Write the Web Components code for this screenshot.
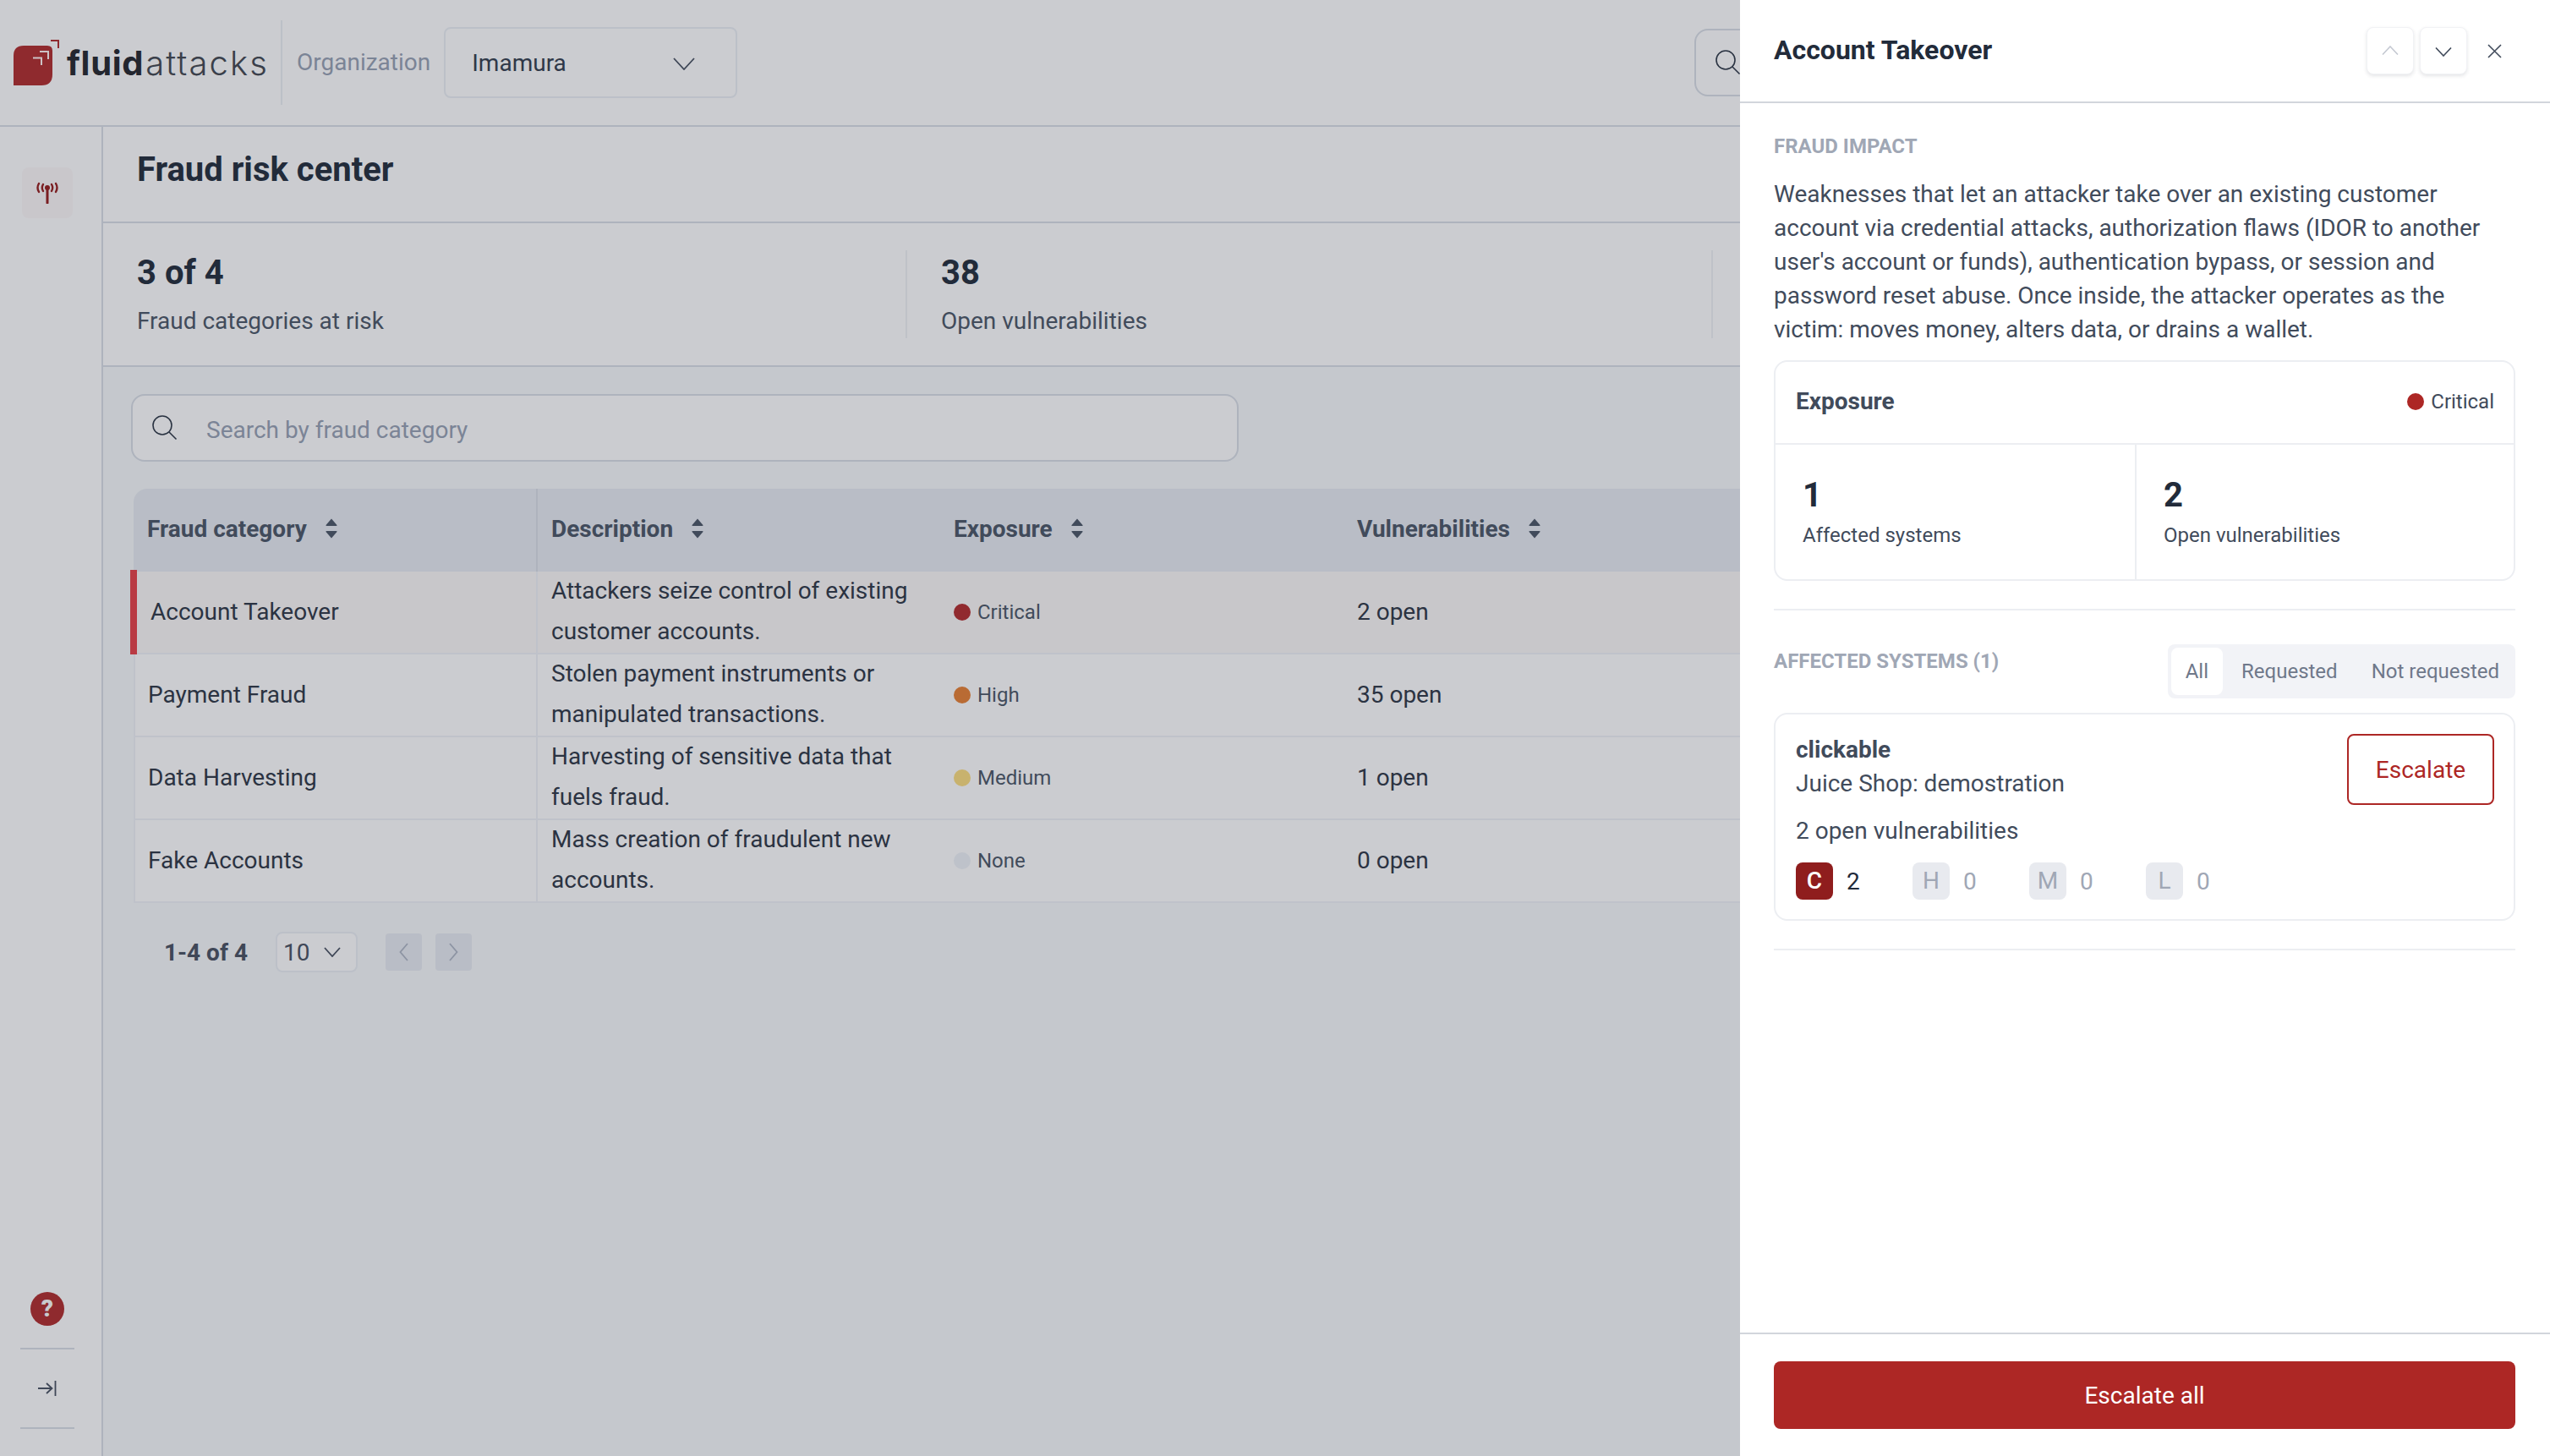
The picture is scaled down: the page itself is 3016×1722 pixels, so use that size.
<!DOCTYPE html>
<html lang="en">
<head>
<meta charset="utf-8">
<title>Fraud risk center</title>
<style>
  html, body { margin: 0; height: 100%; }
  body {
    width: 3016px;
    height: 1722px;
    overflow: hidden;
    position: relative;
    background: #cbccd0;
    color: #222b3a;
    font-family: Roboto, "Liberation Sans", sans-serif;
    font-size: 28px;
  }
</style>
</head>
<body>
  <fraud-app>
    <top-bar slot="top"></top-bar>
    <side-nav slot="side"></side-nav>
    <risk-page slot="main">
      <stat-tile slot="stats" value="3 of 4">Fraud categories at risk</stat-tile>
      <stat-tile slot="stats" value="38" divided>Open vulnerabilities</stat-tile>
      <stat-tile slot="stats" divided></stat-tile>
      <fraud-table slot="table">
        <fraud-row name="Account Takeover" level="critical" label="Critical" open="2 open" selected>Attackers seize control of existing customer accounts.</fraud-row>
        <fraud-row name="Payment Fraud" level="high" label="High" open="35 open">Stolen payment instruments or manipulated transactions.</fraud-row>
        <fraud-row name="Data Harvesting" level="medium" label="Medium" open="1 open">Harvesting of sensitive data that fuels fraud.</fraud-row>
        <fraud-row name="Fake Accounts" level="none" label="None" open="0 open">Mass creation of fraudulent new accounts.</fraud-row>
      </fraud-table>
    </risk-page>
  </fraud-app>

  <detail-drawer title-text="Account Takeover">
    <system-card name="clickable" detail="Juice Shop: demostration" open="2 open vulnerabilities"></system-card>
  </detail-drawer>

<script>
const CHEVRON_DOWN = (width, height, color) => `
  <svg width="${width}" height="${height}" viewBox="0 0 ${width} ${height}" fill="none" stroke="${color}" stroke-width="1.8" aria-hidden="true">
    <path d="M1 1L${width / 2} ${height - 1}L${width - 1} 1"/>
  </svg>`;

const SEARCH_ICON = `
  <svg width="30" height="30" viewBox="0 0 30 30" fill="none" stroke="#2a3342" stroke-width="1.6" aria-hidden="true">
    <circle cx="12" cy="12" r="11"/>
    <path d="M20 20l8.500 8.500"/>
  </svg>`;

class FraudApp extends HTMLElement {
  constructor() {
    super();
    this.attachShadow({ mode: 'open' });
    this.shadowRoot.innerHTML = `
      <style>
        :host { display: grid; grid-template-columns: 122px 1fr; grid-template-rows: 150px 1572px; width: 3016px; height: 1722px; }
        .top { grid-column: 1 / 3; min-width: 0; }
        .main { min-width: 0; overflow: hidden; }
      </style>
      <div class="top"><slot name="top"></slot></div>
      <slot name="side"></slot>
      <div class="main"><slot name="main"></slot></div>
    `;
  }
}

class TopBar extends HTMLElement {
  constructor() {
    super();
    this.attachShadow({ mode: 'open' });
    this.shadowRoot.innerHTML = `
      <style>
        :host { display: flex; align-items: center; box-sizing: border-box; height: 150px; border-bottom: 2px solid #aeb3bd; overflow: hidden; }
        .logo { display: flex; align-items: center; width: 332px; box-sizing: border-box; padding-left: 10px; height: 100%; position: relative; }
        .logo svg { flex: none; width: 60px; height: 60px; }
        .word { margin-left: 9px; margin-top: 1px; font-family: Inter, Roboto, sans-serif; font-size: 40px; line-height: 48px; color: #23262f; white-space: nowrap; }
        .word b { font-weight: 700; letter-spacing: .7px; }
        .word span { font-weight: 300; color: #3a3f4a; letter-spacing: 2.05px; margin-left: 2px; }
        .rule { flex: none; width: 2px; height: 100px; background: #bcc0c7; }
        .org { margin-left: 17px; color: #7b8496; line-height: 40px; }
        .select { flex: none; box-sizing: border-box; width: 347px; height: 84px; margin-left: 16px; padding: 0 48px 0 31px; display: flex; align-items: center; justify-content: space-between; border: 2px solid #bcc0c8; border-radius: 8px; color: #2f3848; }
        .select svg { margin-top: 3px; }
        .search { flex: none; box-sizing: border-box; width: 200px; height: 80px; margin-left: 1132px; padding-left: 23px; display: flex; align-items: center; border: 2px solid #aeb3bd; border-radius: 16px; }
      </style>
      <div class="logo">
        <svg viewBox="10 44 60 60" aria-hidden="true">
          <path d="M16 101V66Q16 54 28 54H56Q62 54 62 60V88Q62 101 49 101Z" fill="#8f2a2e"/>
          <path d="M47 61H57V70M39 68.500H49V77" fill="none" stroke="#cdc2c5" stroke-width="2"/>
          <path d="M60 48H69V57" fill="none" stroke="#8f2a2e" stroke-width="2"/>
        </svg>
        <div class="word"><b>fluid</b><span>attacks</span></div>
      </div>
      <div class="rule"></div>
      <div class="org">Organization</div>
      <div class="select">Imamura ${CHEVRON_DOWN(26, 15, '#3f4757')}</div>
      <div class="search">${SEARCH_ICON}</div>
    `;
  }
}

class SideNav extends HTMLElement {
  constructor() {
    super();
    this.attachShadow({ mode: 'open' });
    this.shadowRoot.innerHTML = `
      <style>
        :host { display: flex; flex-direction: column; align-items: center; box-sizing: border-box; width: 122px; height: 1572px; padding: 48px 8px 32px 0; border-right: 2px solid #aeb3bd; }
        .tile { width: 60px; height: 60px; border-radius: 8px; background: #c9c7cb; display: flex; align-items: center; justify-content: center; }
        .bottom { margin-top: auto; display: flex; flex-direction: column; align-items: center; }
        .help { width: 40px; height: 40px; border-radius: 50%; background: #8f2a2e; color: #c8cace; font-weight: 900; font-size: 28px; line-height: 40px; text-align: center; }
        hr { width: 64px; height: 2px; margin: 0; border: 0; background: #aeb3bd; }
        .help + hr { margin-top: 26px; }
        .collapse { height: 92px; display: flex; align-items: center; justify-content: center; }
      </style>
      <div class="tile">
        <svg width="28" height="26" viewBox="0 0 28 26" fill="none" stroke="#7a1e22" stroke-width="2.400" stroke-linecap="round" aria-hidden="true">
          <circle cx="14" cy="7" r="3" fill="#7a1e22" stroke="none"/>
          <path d="M14 7v18" stroke-width="3"/>
          <path d="M9 3q-2.400 4 0 8M4 2q-3 5 0 10M19 3q2.400 4 0 8M24 2q3 5 0 10"/>
        </svg>
      </div>
      <div class="bottom">
        <div class="help">?</div>
        <hr>
        <div class="collapse">
          <svg width="22" height="20" viewBox="0 0 22 20" fill="none" stroke="#3f4757" stroke-width="1.800" aria-hidden="true">
            <path d="M0 10h16M10 4l6.500 6-6.500 6M20.500 1v18"/>
          </svg>
        </div>
        <hr>
      </div>
    `;
  }
}

class StatTile extends HTMLElement {
  constructor() {
    super();
    this.attachShadow({ mode: 'open' });
  }

  connectedCallback() {
    const value = this.getAttribute('value') || '';
    this.shadowRoot.innerHTML = `
      <style>
        :host { display: block; box-sizing: border-box; width: 953px; height: 104px; padding-left: 40px; }
        :host([divided]) { border-left: 2px solid #bfc2c8; }
        .value { font-size: 40px; font-weight: 700; line-height: 52px; height: 52px; color: #222b3a; padding-top: 1px; margin-bottom: 11px; }
        .label { line-height: 40px; color: #414b5b; }
      </style>
      <div class="value">${value}</div>
      <div class="label"><slot></slot></div>
    `;
  }
}

class RiskPage extends HTMLElement {
  constructor() {
    super();
    this.attachShadow({ mode: 'open' });
    this.shadowRoot.innerHTML = `
      <style>
        :host { display: block; height: 1572px; }
        header { box-sizing: border-box; height: 114px; padding: 27px 0 0 40px; border-bottom: 2px solid #aeb3bd; }
        h1 { margin: 0; font-size: 40px; font-weight: 700; line-height: 48px; color: #222b3a; }
        .stats { display: flex; padding: 32px 0; border-bottom: 2px solid #aeb3bd; margin-left: 0; }
        ::slotted(stat-tile:first-child) { width: 949px; }
        .content { background: #c5c8cd; height: 1288px; padding-top: 32px; box-sizing: border-box; }
        .search { box-sizing: border-box; width: 1310px; height: 80px; margin-left: 33px; padding-left: 23px; display: flex; align-items: center; gap: 34px; background: #cbccd0; border: 2px solid #aeb3bd; border-radius: 16px; color: #7b8496; }
        .search span { padding-top: 4px; }
        .table { margin: 32px 0 0 36px; }
        .pager { display: flex; align-items: center; height: 48px; margin: 34px 0 0 72px; }
        .pager b { color: #3f4757; font-weight: 700; }
        .size { box-sizing: border-box; width: 97px; height: 48px; margin-left: 33px; padding: 0 18px 0 7px; display: flex; align-items: center; justify-content: space-between; border: 2px solid #bcc0c8; border-radius: 8px; background: #cbccd0; color: #3f4757; }
        .nav { width: 43px; height: 44px; margin-left: 16px; border-radius: 4px; background: #b9bdc6; display: flex; align-items: center; justify-content: center; }
        .nav.first { margin-left: 33px; }
      </style>
      <header><h1>Fraud risk center</h1></header>
      <div class="stats"><slot name="stats"></slot></div>
      <div class="content">
        <div class="search">${SEARCH_ICON}<span>Search by fraud category</span></div>
        <div class="table"><slot name="table"></slot></div>
        <div class="pager">
          <b>1-4 of 4</b>
          <div class="size">10 ${CHEVRON_DOWN(20, 12, '#3f4757')}</div>
          <div class="nav first">
            <svg width="11" height="22" viewBox="0 0 11 22" fill="none" stroke="#8d94a3" stroke-width="1.800" aria-hidden="true"><path d="M10 1L1.500 11 10 21"/></svg>
          </div>
          <div class="nav">
            <svg width="11" height="22" viewBox="0 0 11 22" fill="none" stroke="#8d94a3" stroke-width="1.800" aria-hidden="true"><path d="M1 1l8.500 10L1 21"/></svg>
          </div>
        </div>
      </div>
    `;
  }
}

const SORT_ICON = `
  <svg width="14" height="24" viewBox="0 0 14 24" fill="#414b5b" aria-hidden="true">
    <path d="M7 .5L13.500 8q.5 1-1 1h-11q-1.500 0-1-1zM7 23.500L13.500 16q.5-1-1-1h-11q-1.500 0-1 1z"/>
  </svg>`;

const TABLE_COLUMNS = '478px 476px 477px 477px 1fr';

class FraudTable extends HTMLElement {
  constructor() {
    super();
    this.attachShadow({ mode: 'open' });
    const heads = ['Fraud category', 'Description', 'Exposure', 'Vulnerabilities'];
    this.shadowRoot.innerHTML = `
      <style>
        :host { display: block; width: 2600px; }
        .head { display: grid; grid-template-columns: ${TABLE_COLUMNS}; height: 98px; background: #b9bdc6; border-top-left-radius: 16px; }
        .cell { box-sizing: border-box; display: flex; align-items: center; gap: 22px; padding: 0 0 4px 16px; font-weight: 700; color: #414b5b; }
        .cell:first-child { border-right: 2px solid #aeb3bd; }
      </style>
      <div class="head">
        ${heads.map((head) => `<div class="cell"><span>${head}</span>${SORT_ICON}</div>`).join('')}
        <div class="cell"></div>
      </div>
      <slot></slot>
    `;
  }
}

const LEVEL_COLORS = {
  critical: '#912a2f',
  high: '#b96b34',
  medium: '#c8b26e',
  none: '#bec2ca',
};

class FraudRow extends HTMLElement {
  constructor() {
    super();
    this.attachShadow({ mode: 'open' });
  }

  connectedCallback() {
    const name = this.getAttribute('name');
    const label = this.getAttribute('label');
    const open = this.getAttribute('open');
    const dot = LEVEL_COLORS[this.getAttribute('level')];
    this.shadowRoot.innerHTML = `
      <style>
        :host { display: grid; grid-template-columns: ${TABLE_COLUMNS}; position: relative; height: 98px; box-sizing: border-box; border-bottom: 2px solid #bfc2ca; background: #cbccd0; color: #2b3342; }
        :host([selected]) { background: #c8c7ca; }
        :host([selected]) .bar { display: block; }
        :host([selected]) .name { padding-left: 18px; }
        .bar { display: none; position: absolute; left: -4px; top: -2px; bottom: -2px; width: 8px; background: #b93a43; }
        .name { box-sizing: border-box; display: flex; align-items: center; padding: 0 0 2px 15px; border-left: 2px solid #bfc2ca; border-right: 2px solid #bfc2ca; }
        .desc { box-sizing: border-box; padding: 0 16px; margin-top: -1px; line-height: 48px; height: 96px; }
        .exp { display: flex; align-items: center; gap: 8px; padding-left: 16px; font-size: 24px; color: #414b5b; }
        .exp i { flex: none; width: 20px; height: 20px; border-radius: 50%; background: ${dot}; }
        .open { display: flex; align-items: center; padding: 0 0 2px 16px; }
      </style>
      <div class="bar"></div>
      <div class="name">${name}</div>
      <div class="desc"><slot></slot></div>
      <div class="exp"><i></i>${label}</div>
      <div class="open">${open}</div>
    `;
  }
}

class SystemCard extends HTMLElement {
  constructor() {
    super();
    this.attachShadow({ mode: 'open' });
  }

  connectedCallback() {
    const chips = [['C', 2], ['H', 0], ['M', 0], ['L', 0]];
    this.shadowRoot.innerHTML = `
      <style>
        :host { display: flex; justify-content: space-between; box-sizing: border-box; height: 246px; padding: 22px 23px 0 24px; border: 2px solid #eceef2; border-radius: 16px; }
        .name { font-weight: 700; line-height: 40px; color: #414b5b; }
        .line { line-height: 40px; color: #414b5b; }
        .line.open { margin-top: 16px; }
        .chips { display: grid; grid-template-columns: repeat(4, 138px); margin-top: 17px; }
        .group { display: flex; align-items: center; gap: 16px; color: #a0a7b5; }
        .chip { width: 44px; height: 44px; border-radius: 8px; background: #e8eaef; text-align: center; line-height: 44px; }
        .group.hot { color: #222b3a; }
        .group.hot .chip { background: #8f1d1d; color: #fff; font-weight: 500; }
        button { flex: none; box-sizing: border-box; width: 174px; height: 84px; margin-top: 1px; padding: 0; background: #fff; border: 2px solid #ad2725; border-radius: 8px; color: #ad2725; font: inherit; }
      </style>
      <div>
        <div class="name">${this.getAttribute('name')}</div>
        <div class="line">${this.getAttribute('detail')}</div>
        <div class="line open">${this.getAttribute('open')}</div>
        <div class="chips">
          ${chips.map(([letter, count]) => `
            <div class="group ${count ? 'hot' : ''}"><span class="chip">${letter}</span><span>${count}</span></div>
          `).join('')}
        </div>
      </div>
      <button>Escalate</button>
    `;
  }
}

class DetailDrawer extends HTMLElement {
  constructor() {
    super();
    this.attachShadow({ mode: 'open' });
  }

  connectedCallback() {
    const title = this.getAttribute('title-text');
    this.shadowRoot.innerHTML = `
      <style>
        :host { position: absolute; top: 0; right: 0; bottom: 0; width: 958px; display: flex; flex-direction: column; background: #fff; }
        header { flex: none; box-sizing: border-box; height: 122px; padding: 0 57px 0 40px; display: flex; align-items: center; border-bottom: 2px solid #d2d6dc; }
        h2 { margin: 0 auto 2px 0; font-size: 32px; font-weight: 700; color: #222b3a; }
        .step { flex: none; box-sizing: border-box; width: 56px; height: 56px; margin-left: 7px; display: flex; align-items: center; justify-content: center; background: #fff; border: 1px solid #f1f2f5; border-radius: 8px; box-shadow: 0 2px 4px rgba(32, 40, 60, .12); }
        .step svg { margin-top: -2px; }
        .step + .step svg { margin-top: 2px; }
        .close { flex: none; margin-left: 24px; }
        .body { flex: 1; padding: 35px 41px 0 40px; min-height: 0; }
        .eyebrow { font-size: 24px; font-weight: 700; line-height: 32px; color: #a0a7b5; text-transform: uppercase; }
        p { margin: 21px 0 16px; line-height: 40px; color: #414b5b; }
        .card { box-sizing: border-box; height: 261px; border: 2px solid #eceef2; border-radius: 16px; }
        .card-head { box-sizing: border-box; height: 98px; padding: 0 23px 3px 24px; display: flex; align-items: center; justify-content: space-between; border-bottom: 2px solid #eceef2; }
        .card-head b { color: #414b5b; }
        .sev { display: flex; align-items: center; gap: 8px; font-size: 24px; color: #414b5b; }
        .sev i { width: 20px; height: 20px; border-radius: 50%; background: #ad2725; }
        .nums { display: grid; grid-template-columns: 427px 1fr; }
        .num { box-sizing: border-box; height: 159px; padding: 36px 0 0 32px; }
        .num:first-child { border-right: 2px solid #eceef2; }
        .num b { display: block; font-size: 40px; line-height: 48px; color: #222b3a; }
        .num span { display: block; margin-top: 5px; font-size: 24px; line-height: 36px; color: #414b5b; }
        hr { height: 2px; margin: 33px 0 0; border: 0; background: #eceef2; }
        .sys-head { display: flex; justify-content: space-between; margin: 40px 0 17px; }
        .sys-head .eyebrow { margin-top: 4px; }
        .tabs { box-sizing: border-box; height: 64px; padding: 4px 0 4px 4px; display: flex; background: #f2f3f7; border-radius: 8px; font-size: 24px; color: #6f788a; }
        .tabs span { display: flex; align-items: center; padding: 0 20px; border-radius: 8px; }
        .tabs span:last-child { padding-right: 19px; }
        .tabs .on { padding: 0 17px; margin-right: 2px; background: #fff; }
        footer { flex: none; padding: 32px 41px 32px 40px; border-top: 2px solid #d2d6dc; }
        .all { display: block; width: 100%; height: 80px; padding: 0; background: #ad2725; border: 0; border-radius: 8px; color: #fff; font: inherit; }
      </style>
      <header>
        <h2>${title}</h2>
        <div class="step"><svg width="20" height="11" viewBox="0 0 20 11" fill="none" stroke="#c5c9d2" stroke-width="1.600" aria-hidden="true"><path d="M1 10.500L10 1l9 9.500"/></svg></div>
        <div class="step"><svg width="20" height="11" viewBox="0 0 20 11" fill="none" stroke="#414b5b" stroke-width="1.600" aria-hidden="true"><path d="M1 .5L10 10 19 .5"/></svg></div>
        <svg class="close" width="17" height="17" viewBox="0 0 17 17" fill="none" stroke="#414b5b" stroke-width="1.600" aria-hidden="true"><path d="M1 1l15 15M16 1L1 16"/></svg>
      </header>
      <div class="body">
        <div class="eyebrow">Fraud impact</div>
        <p>Weaknesses that let an attacker take over an existing customer account via credential attacks, authorization flaws (IDOR to another user's account or funds), authentication bypass, or session and password reset abuse. Once inside, the attacker operates as the victim: moves money, alters data, or drains a wallet.</p>
        <div class="card">
          <div class="card-head"><b>Exposure</b><div class="sev"><i></i>Critical</div></div>
          <div class="nums">
            <div class="num"><b>1</b><span>Affected systems</span></div>
            <div class="num"><b>2</b><span>Open vulnerabilities</span></div>
          </div>
        </div>
        <hr>
        <div class="sys-head">
          <div class="eyebrow">Affected systems (1)</div>
          <div class="tabs"><span class="on">All</span><span>Requested</span><span>Not requested</span></div>
        </div>
        <slot></slot>
        <hr>
      </div>
      <footer><button class="all">Escalate all</button></footer>
    `;
  }
}

customElements.define('fraud-app', FraudApp);
customElements.define('top-bar', TopBar);
customElements.define('side-nav', SideNav);
customElements.define('stat-tile', StatTile);
customElements.define('risk-page', RiskPage);
customElements.define('fraud-table', FraudTable);
customElements.define('fraud-row', FraudRow);
customElements.define('system-card', SystemCard);
customElements.define('detail-drawer', DetailDrawer);
</script>
</body>
</html>
